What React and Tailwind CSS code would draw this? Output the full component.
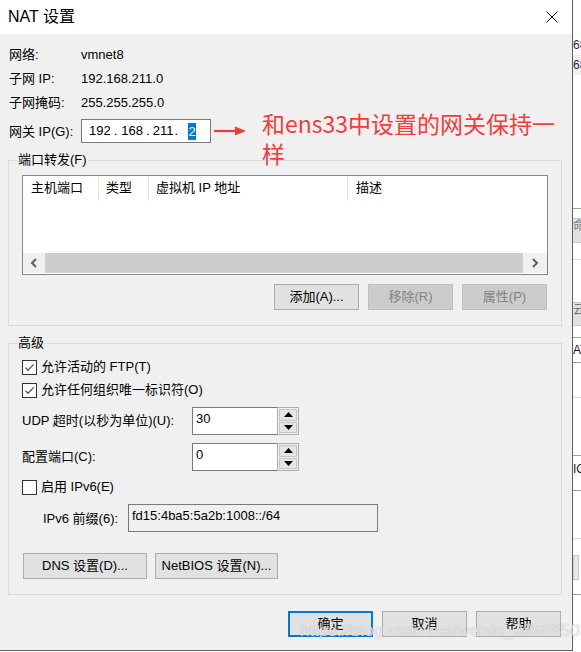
import React from "react";

function Btn({ children, className = "", disabled = false, def = false }) {
  const base = "h-[26px] flex items-center justify-center text-[13px] leading-[16px] shrink-0";
  const look = disabled
    ? "bg-[#cccccc] border border-[#bfbfbf] text-[#838383]"
    : def
    ? "bg-[#e1e1e1] border-2 border-[#0078d7] text-black"
    : "bg-[#e1e1e1] border border-[#adadad] text-black";
  return <div className={`${base} ${look} ${className}`}>{children}</div>;
}

function Check({ checked }) {
  return (
    <span className="w-[15px] h-[15px] border border-[#333333] bg-white flex items-center justify-center shrink-0">
      {checked && (
        <svg width="11" height="11" viewBox="0 0 11 11">
          <path d="M1.5 5.6 L4.1 8.2 L9.6 2.4" fill="none" stroke="#555555" strokeWidth="1.3" />
        </svg>
      )}
    </span>
  );
}

function Spin({ value }) {
  return (
    <div className="w-[107px] h-[28px] flex shrink-0">
      <div className="flex-1 bg-white border border-[#7a7a7a] border-r-0 pl-[3px] pt-[3px] text-[13px] leading-[16px]">
        {value}
      </div>
      <div className="w-[22px] border border-[#adadad] bg-[#f0f0f0] p-[1px] flex flex-col gap-[1px]">
        <div className="flex-1 bg-[#e5e5e5] border border-[#c4c4c4] flex items-center justify-center">
          <svg width="9" height="5" viewBox="0 0 9 5">
            <path d="M0 5 L4.5 0 L9 5Z" fill="#000" />
          </svg>
        </div>
        <div className="flex-1 bg-[#e5e5e5] border border-[#c4c4c4] flex items-center justify-center">
          <svg width="9" height="5" viewBox="0 0 9 5">
            <path d="M0 0 L4.5 5 L9 0Z" fill="#000" />
          </svg>
        </div>
      </div>
    </div>
  );
}

function Group({ label, className = "", children }) {
  return (
    <div className={`relative w-[554px] border border-[#dcdcdc] shrink-0 ${className}`}>
      <span className="absolute -top-[9px] left-[8px] px-[1px] bg-[#f0f0f0] text-[13px] leading-[16px]">
        {label}
      </span>
      {children}
    </div>
  );
}

function Strip() {
  return (
    <div className="w-[8px] h-[652px] bg-white flex flex-col overflow-hidden text-[12px] leading-[14px] shrink-0">
      <div className="h-[38px]" />
      <div className="h-[17px] text-[#1a1a60] whitespace-nowrap">68</div>
      <div className="h-[20px] bg-[#f0f0f0] text-[#1a1a60] whitespace-nowrap pt-[3px]">68</div>
      <div className="h-[133px]" />
      <div className="h-[1px] bg-[#a0a0a0]" />
      <div className="h-[9px]" />
      <div className="h-[25px] bg-[#e1e1e1] border-y border-[#c8c8c8] text-[#777] whitespace-nowrap">命</div>
      <div className="h-[16px]" />
      <div className="h-[1px] bg-[#dcdcdc]" />
      <div className="h-[42px]" />
      <div className="h-[24px] bg-[#e1e1e1] border-y border-[#c8c8c8] text-[#777] whitespace-nowrap">云</div>
      <div className="h-[11px]" />
      <div className="h-[1px] bg-[#a0a0a0]" />
      <div className="h-[24px] whitespace-nowrap pt-[5px] text-[#3a0a20]">AT</div>
      <div className="h-[1px] bg-[#a0a0a0]" />
      <div className="h-[34px]" />
      <div className="h-[1px] bg-[#dcdcdc]" />
      <div className="h-[57px]" />
      <div className="h-[1px] bg-[#a0a0a0]" />
      <div className="h-[34px] whitespace-nowrap pt-[6px] text-[#222]">IC</div>
      <div className="h-[1px] bg-[#a0a0a0]" />
      <div className="h-[47px]" />
      <div className="h-[1px] bg-[#dcdcdc]" />
      <div className="h-[16px]" />
      <div className="h-[25px] w-[6px] bg-[#e8e8e8] border border-[#c8c8c8]" />
      <div className="h-[14px]" />
      <div className="h-[1px] bg-[#a0a0a0]" />
    </div>
  );
}

export default function App() {
  return (
    <div className="relative w-[581px] h-[652px] bg-white flex items-start overflow-hidden text-black font-['Liberation_Sans','Noto_Sans_CJK_SC',sans-serif]">
      <div className="w-[573px] h-[651px] border-r border-b border-[#5f5f5f] bg-[#f0f0f0] flex flex-col shrink-0">
        {/* title bar */}
        <div className="h-[34px] bg-white flex items-center pl-[8px] shrink-0">
          <span className="text-[16px] leading-[20px]">NAT 设置</span>
          <svg className="ml-auto mr-[14px]" width="12" height="12" viewBox="0 0 12 12">
            <path d="M0.5 0.5 L11.5 11.5 M11.5 0.5 L0.5 11.5" stroke="#000" strokeWidth="1" />
          </svg>
        </div>

        {/* body */}
        <div className="flex-1 flex flex-col pl-[8px] pt-[9px] text-[13px] leading-[16px]">
          <div className="flex items-center h-[24px] pl-[1px]">
            <span className="w-[72px]">网络:</span>
            <span>vmnet8</span>
          </div>
          <div className="flex items-center h-[24px] pl-[1px]">
            <span className="w-[72px]">子网 IP:</span>
            <span>192.168.211.0</span>
          </div>
          <div className="flex items-center h-[24px] pl-[1px]">
            <span className="w-[72px]">子网掩码:</span>
            <span>255.255.255.0</span>
          </div>
          <div className="flex items-center h-[24px] pl-[1px] mt-[4px]">
            <span className="w-[72px] pt-[1px]">网关 IP(G):</span>
            <div className="w-[130px] h-[24px] bg-white border border-[#7a7a7a] flex items-center pl-[7px]">
              <span>192</span>
              <span className="ml-[3px]">.</span>
              <span className="ml-[4px]">168</span>
              <span className="ml-[3px]">.</span>
              <span className="ml-[3px]">211</span>
              <span className="ml-[1px]">.</span>
              <span className="ml-[10px] w-[8px] h-[17px] leading-[17px] bg-[#0078d7] text-white text-center">2</span>
            </div>
            <svg className="ml-[3px]" width="33" height="12" viewBox="0 0 33 12">
              <path d="M0 6 L24 6" stroke="#f23a3a" strokeWidth="2.2" />
              <path d="M21 1.5 L32 6 L21 10.5Z" fill="#f23a3a" />
            </svg>
          </div>

          {/* 端口转发 */}
          <Group label="端口转发(F)" className="h-[166px] mt-[17px]">
            <div className="pl-[13px] pt-[14px]">
              <div className="w-[526px] h-[100px] border border-[#828790] bg-white flex flex-col">
                <div className="h-[25px] flex items-stretch">
                  <div className="w-[76px] border-r border-[#e5e5e5] pl-[8px] pt-[4px]">主机端口</div>
                  <div className="w-[50px] border-r border-[#e5e5e5] pl-[7px] pt-[4px]">类型</div>
                  <div className="w-[199px] border-r border-[#e5e5e5] pl-[7px] pt-[4px]">虚拟机 IP 地址</div>
                  <div className="pl-[8px] pt-[4px]">描述</div>
                </div>
                <div className="flex-1" />
                <div className="h-[20px] flex mb-[1px]">
                  <div className="w-[22px] bg-[#f0f0f0] flex items-center justify-center">
                    <svg width="8" height="10" viewBox="0 0 8 10">
                      <path d="M6 1 L2 5 L6 9" fill="none" stroke="#606060" strokeWidth="2" />
                    </svg>
                  </div>
                  <div className="flex-1 bg-[#cdcdcd]" />
                  <div className="w-[24px] bg-[#f0f0f0] flex items-center justify-center">
                    <svg width="8" height="10" viewBox="0 0 8 10">
                      <path d="M2 1 L6 5 L2 9" fill="none" stroke="#606060" strokeWidth="2" />
                    </svg>
                  </div>
                </div>
              </div>
              <div className="w-[526px] flex justify-end gap-[9px] mt-[9px] pr-[1px]">
                <Btn className="w-[85px]">添加(A)...</Btn>
                <Btn className="w-[85px]" disabled>移除(R)</Btn>
                <Btn className="w-[85px]" disabled>属性(P)</Btn>
              </div>
            </div>
          </Group>

          {/* 高级 */}
          <Group label="高级" className="h-[252px] mt-[17px]">
            <div className="flex flex-col pl-[13px] pt-[12px]">
              <div className="h-[22px] flex items-center gap-[4px]">
                <Check checked />
                <span>允许活动的 FTP(T)</span>
              </div>
              <div className="h-[22px] flex items-center gap-[4px] mt-[1px]">
                <Check checked />
                <span>允许任何组织唯一标识符(O)</span>
              </div>
              <div className="h-[28px] flex items-center mt-[6px]">
                <span className="w-[170px]">UDP 超时(以秒为单位)(U):</span>
                <Spin value="30" />
              </div>
              <div className="h-[28px] flex items-center mt-[8px]">
                <span className="w-[170px]">配置端口(C):</span>
                <Spin value="0" />
              </div>
              <div className="h-[22px] flex items-center gap-[4px] mt-[5px]">
                <Check />
                <span>启用 IPv6(E)</span>
              </div>
              <div className="h-[28px] flex items-center mt-[6px] pl-[21px]">
                <span className="w-[85px] pt-[2px]">IPv6 前缀(6):</span>
                <div className="w-[250px] h-[28px] border border-[#7a7a7a] bg-[#f0f0f0] pl-[3px] pt-[3px]">
                  fd15:4ba5:5a2b:1008::/64
                </div>
              </div>
              <div className="h-[26px] flex gap-[8px] mt-[21px] pl-[1px]">
                <Btn className="w-[124px]">DNS 设置(D)...</Btn>
                <Btn className="w-[123px]">NetBIOS 设置(N)...</Btn>
              </div>
            </div>
          </Group>

          {/* bottom buttons */}
          <div className="w-[554px] flex justify-end gap-[9px] mt-[16px] pr-[1px]">
            <Btn className="w-[85px]" def>确定</Btn>
            <Btn className="w-[85px]">取消</Btn>
            <Btn className="w-[85px]">帮助</Btn>
          </div>
        </div>
      </div>
      <Strip />

      {/* red annotation overlay */}
      <div className="absolute left-[262px] top-[108px] text-[23px] leading-[30px] text-[#f53b3b] font-['Noto_Sans_CJK_SC',sans-serif] whitespace-nowrap">
        和ens33中设置的网关保持一
        <br />
        样
      </div>

      {/* watermark overlay */}
      <div className="absolute left-[300px] top-[620px] text-[17px] leading-[22px] text-white/70 whitespace-nowrap [text-shadow:0_0_1px_rgba(120,120,120,0.6)] font-['Liberation_Sans',sans-serif]">
        https://blog.csdn.net/weixin_38568503
      </div>
    </div>
  );
}
